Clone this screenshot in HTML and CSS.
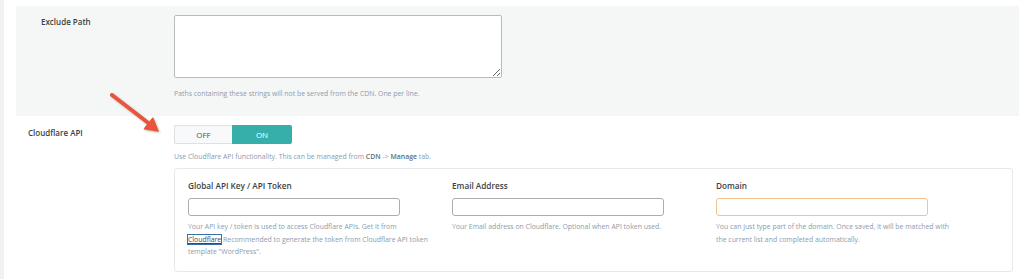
FILE: index.html
```html
<!DOCTYPE html>
<html lang="en">
<head>
    <meta charset="utf-8">
    <title>CDN Settings</title>
    <link rel="stylesheet" href="styles.css">
</head>
<body>
    <div class="page">
        <div class="row row--alt">
            <div class="label">Exclude Path</div>
            <div class="field">
                <textarea class="textarea"></textarea>
                <p class="help help--textarea">Paths containing these strings will not be served from the CDN. One per line.</p>
            </div>
        </div>

        <div class="row">
            <div class="label">Cloudflare API</div>
            <div class="field">
                <div class="toggle">
                    <span class="toggle-off">OFF</span>
                    <span class="toggle-on">ON</span>
                </div>
                <p class="help help--toggle">Use Cloudflare API functionality. This can be managed from <b>CDN</b> -&gt; <b>Manage</b> tab.</p>

                <div class="box">
                    <div class="col">
                        <h5 class="col-title">Global API Key / API Token</h5>
                        <input type="text" class="input">
                        <p class="help help--wrap">Your API key / token is used to access Cloudflare APIs. Get it from <a href="#" class="link">Cloudflare</a> Recommended to generate the token from Cloudflare API token template "WordPress".</p>
                    </div>
                    <div class="col">
                        <h5 class="col-title">Email Address</h5>
                        <input type="text" class="input">
                        <p class="help help--wrap">Your Email address on Cloudflare. Optional when API token used.</p>
                    </div>
                    <div class="col">
                        <h5 class="col-title">Domain</h5>
                        <input type="text" class="input input--warn">
                        <p class="help help--wrap">You can just type part of the domain. Once saved, it will be matched with the current list and completed automatically.</p>
                    </div>
                </div>
            </div>
        </div>

        <svg class="arrow" width="64" height="56" viewBox="0 0 64 56">
            <line x1="8" y1="10" x2="45" y2="38.5" stroke="#e9553c" stroke-width="4" stroke-linecap="round"/>
            <polygon points="54,46 40.5,43.8 48.8,33.2" fill="#e9553c" stroke="#e9553c" stroke-width="1.5" stroke-linejoin="round"/>
        </svg>
    </div>
</body>
</html>
```

FILE: styles.css
```css
:root {
    --ff: 'Open Sans', 'Liberation Sans', sans-serif;
    --help: #8d9bab;
    --text: #3b3f44;
    --teal: #36afaa;
}

body {
    font-family: var(--ff);
    color: var(--text);
    background: #fff;

    margin: 0;
}

.page {
    position: relative;
    min-height: 279px;
    border-left: 4px solid #f1f1f1;
    padding: 6px 5px 0 12px;
}

.row {
    display: grid;
    grid-template-columns: 158px 1fr;
}
.row--alt {
    background: #f5f7f7;
    padding: 9px 0 15px;
}
.row + .row {
    padding-top: 9px;
}

.label {
    font-size: 8px;
    font-weight: 600;
    padding-left: 12px;
    padding-top: 2px;
}
.row--alt .label {
    padding-left: 25px;
    padding-top: 1px;
}

.textarea {
    display: block;
    box-sizing: border-box;
    width: 328px;
    height: 63px;
    margin: 0;
    border: 1px solid #b9bcbf;
    border-radius: 2px;
    background: #fff;
}

.help {
    font-size: 6.9px;
    line-height: 12.5px;
    color: var(--help);
    margin: 0;
}
.help b {
    color: #62707d;
    font-weight: 600;
}
.help--textarea {
    margin-top: 10px;
}
.help--toggle {
    margin-top: 7px;
}
.help--wrap {
    max-width: 241px;
    margin-top: 5.5px;
}

.toggle {
    display: flex;
    width: 118px;
    height: 19px;
    font-size: 8px;
    line-height: 19px;
    text-align: center;
}
.toggle-off {
    box-sizing: border-box;
    width: 58px;
    border: 1px solid #dde1e4;
    border-right: 0;
    border-radius: 2px 0 0 2px;
    line-height: 17px;
    background: #f8f9fa;
    color: #555;
}
.toggle-on {
    width: 60px;
    border-radius: 0 2px 2px 0;
    background: var(--teal);
    color: #fff;
}

.box {
    display: flex;
    box-sizing: border-box;
    width: 839px;
    margin-top: 4.5px;
    padding: 11px 13px 12px;
    border: 1px solid #e6e8ea;
    border-radius: 3px;
}

.col {
    width: 264px;
}

.col-title {
    font-size: 8.2px;
    font-weight: 600;
    margin: 0 0 6px;
    line-height: 12px;
}

.input {
    display: block;
    box-sizing: border-box;
    width: 212px;
    height: 18px;
    margin: 0;
    border: 1px solid #a9adb1;
    border-radius: 3px;
    background: #fff;
}
.input--warn {
    border-color: #f3c290;
}

.link {
    color: #3b4a5a;
    text-decoration: underline;
    outline: 1px solid #3a6fa5;
    outline-offset: 0;
}

.arrow {
    position: absolute;
    left: 100px;
    top: 85px;
    filter: drop-shadow(1px 1px 1px rgba(0, 0, 0, 0.25));
}
```
